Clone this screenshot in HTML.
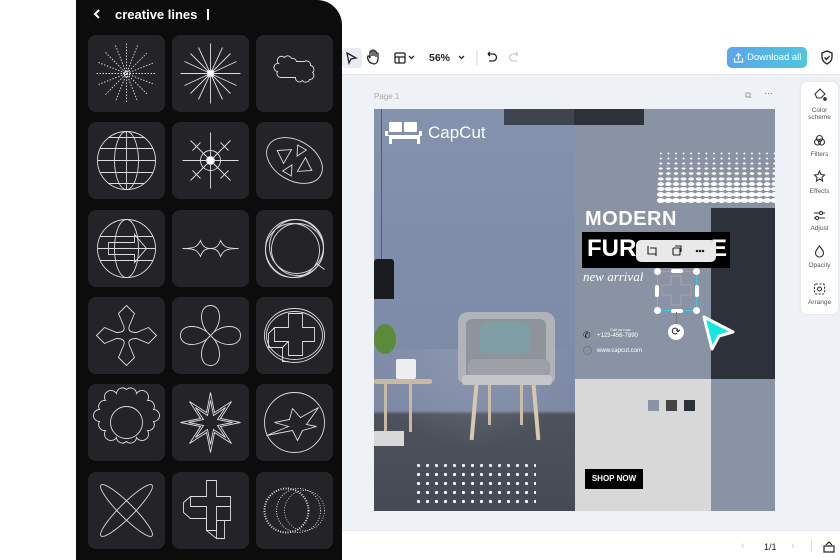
<!DOCTYPE html>
<html><head><meta charset="utf-8"><style>
*{margin:0;padding:0;box-sizing:border-box}
body{width:840px;height:560px;overflow:hidden;background:#fff;position:relative;font-family:"Liberation Sans",sans-serif}
.a{position:absolute}
.tb{color:#222;font-size:11px}
.side div{text-align:center;font-size:6.5px;color:#555;line-height:7px}
.ht{position:absolute;left:0;width:120px}
</style></head><body>
<div class="a" style="left:340px;top:42px;width:500px;height:518px;background:#eef1f5"></div>
<div class="a" style="left:340px;top:42px;width:500px;height:33px;background:#fff;border-bottom:1px solid #e6e8ec"></div>
<div class="a" style="left:340px;top:530px;width:500px;height:30px;background:#fff;border-top:1px solid #e6e8ec"></div>
<div class="a" style="left:342px;top:48px;width:20px;height:20px;background:#e9ecf1;border-radius:4px"></div>
<svg class="a" style="left:340px;top:42px" width="500" height="33" fill="none" stroke="#222" stroke-width="1.3">
<path d="M7 11 L16 16 L11 17 L9 21 Z"/>
<path d="M31 21 c-3-2 -4-5 -3-7 l1 0 l1 2 v-6 a1 1 0 0 1 2 0 v4 v-5 a1 1 0 0 1 2 0 v5 v-4 a1 1 0 0 1 2 0 v5 v-3 a1 1 0 0 1 2 0 v5 c0 3-2 5-4 5z"/>
<rect x="55" y="11" width="10" height="10" rx="1"/><path d="M55 15h10M59 15v6"/>
<path d="M69 14l2.5 2.5 2.5-2.5"/>
<path d="M119 14l2.5 2.5 2.5-2.5"/>
<path d="M137 9v14" stroke="#ddd"/>
<path d="M148 12h5a3.5 3.5 0 0 1 0 7h-4M148 12l2-2M148 12l2 2"/>
<path d="M178 12h-5a3.5 3.5 0 0 0 0 7h4M178 12l-2-2M178 12l-2 2" stroke="#ccc"/>
<path d="M482 11l5-2 5 2v4c0 4-3 6-5 7-2-1-5-3-5-7z"/><path d="M484.5 15.5l2 2 3-3.5"/>
</svg>
<div class="a tb" style="left:429px;top:52px;font-weight:bold;font-size:10.5px">56%</div>
<div class="a" style="left:727px;top:47px;width:80px;height:21px;border-radius:5px;background:linear-gradient(90deg,#5aa6ee,#4fc6dc);color:#fff;font-size:9.5px;line-height:21px;padding-left:20px">Download all</div>
<svg class="a" style="left:733px;top:52px" width="11" height="11" fill="none" stroke="#fff" stroke-width="1.2"><path d="M1.5 6v4h8V6M5.5 8V1.5M3 4l2.5-2.5L8 4"/></svg>
<div class="a" style="left:374px;top:92px;font-size:8px;color:#aaa">Page 1</div>
<div class="a" style="left:745px;top:90px;font-size:9px;color:#999">⧉</div>
<div class="a" style="left:764px;top:88px;font-size:9px;color:#777">···</div>
<div class="a side" style="left:801px;top:82px;width:37px;height:232px;background:#fff;border-radius:6px;box-shadow:0 0 3px rgba(0,0,0,.08)">
<svg class="a" style="left:0;top:0" width="37" height="232" fill="none" stroke="#333" stroke-width="1.1">
<path d="M14 12l5-5 5 5-4 4h-4z"/><circle cx="24" cy="17" r="1.3" fill="#333"/>
<circle cx="16.5" cy="60" r="3"/><circle cx="20.5" cy="60" r="3"/><circle cx="18.5" cy="56.5" r="3"/>
<path d="M18.5 89l1.5 3.5 3.5.5-2.5 2.5.5 3.5-3-2-3 2 .5-3.5-2.5-2.5 3.5-.5z"/>
<path d="M13 131h11M13 136h11"/><circle cx="20" cy="131" r="1.6" fill="#fff"/><circle cx="16" cy="136" r="1.6" fill="#fff"/>
<path d="M18.5 164c-3 4-4 5-4 7a4 4 0 0 0 8 0c0-2-1-3-4-7z"/>
<rect x="13.5" y="202" width="10" height="10" rx="1.5" stroke-dasharray="2 1.5"/><circle cx="18.5" cy="207" r="2"/>
</svg>
<div class="a" style="left:0;top:25px;width:37px">Color<br>scheme</div>
<div class="a" style="left:0;top:69px;width:37px">Filters</div>
<div class="a" style="left:0;top:106px;width:37px">Effects</div>
<div class="a" style="left:0;top:143px;width:37px">Adjust</div>
<div class="a" style="left:0;top:180px;width:37px">Opacity</div>
<div class="a" style="left:0;top:217px;width:37px">Arrange</div>
</div>
<div class="a" style="left:741px;top:540px;font-size:11px;color:#ccc">‹</div>
<div class="a" style="left:764px;top:542px;font-size:9px;color:#222">1/1</div>
<div class="a" style="left:791px;top:540px;font-size:11px;color:#ccc">›</div>
<div class="a" style="left:811px;top:540px;width:1px;height:12px;background:#ddd"></div>
<svg class="a" style="left:822px;top:540px" width="14" height="14" fill="none" stroke="#222" stroke-width="1.2"><rect x="2" y="6" width="10" height="6"/><path d="M4 5l3-3 3 3"/></svg>

<div class="a" style="left:374px;top:109px;width:401px;height:402px;overflow:hidden;background:#8a93a3">
 <div class="a" style="left:0;top:0;width:201px;height:402px;background:linear-gradient(180deg,#8492ad 0%,#7f8dab 40%,#7e8aa5 75%,#4d525c 76%,#454a55 100%)"></div>
 <div class="a" style="left:0;top:240px;width:201px;height:100px;background:radial-gradient(ellipse at 50% 0%,rgba(160,170,190,.4),transparent 70%)"></div>
 <div class="a" style="left:7px;top:0;width:1px;height:150px;background:#a36"></div>
 <div class="a" style="left:0;top:150px;width:20px;height:40px;background:#1b1c1f;border-radius:3px 3px 0 0"></div>
 <div class="a" style="left:0;top:215px;width:22px;height:30px;background:#5a8a3a;border-radius:50%"></div>
 <div class="a" style="left:0;top:270px;width:58px;height:5px;background:#c9b9a0;border-radius:2px"></div>
 <div class="a" style="left:22px;top:250px;width:20px;height:20px;background:#eee;border-radius:2px"></div>
 <div class="a" style="left:10px;top:275px;width:3px;height:50px;background:#c9b9a0"></div>
 <div class="a" style="left:35px;top:275px;width:3px;height:48px;background:#c9b9a0"></div>
 <div class="a" style="left:0;top:322px;width:30px;height:15px;background:#d8d8d8"></div>
 <div class="a" style="left:84px;top:203px;width:97px;height:70px;background:#b0b3b8;border-radius:10px 10px 4px 4px"></div>
 <div class="a" style="left:92px;top:210px;width:80px;height:60px;background:#8f949b;border-radius:6px"></div>
 <div class="a" style="left:106px;top:213px;width:50px;height:32px;background:#7e9fa5;border-radius:8px"></div>
 <div class="a" style="left:94px;top:250px;width:82px;height:20px;background:#9da1a7;border-radius:6px"></div>
 <div class="a" style="left:88px;top:266px;width:90px;height:10px;background:#c4c6c9;border-radius:3px"></div>
 <div class="a" style="left:98px;top:276px;width:4px;height:55px;background:#d7c8b0;transform:rotate(5deg)"></div>
 <div class="a" style="left:160px;top:276px;width:4px;height:55px;background:#d7c8b0;transform:rotate(-5deg)"></div>
 <div class="a" style="left:114px;top:276px;width:3px;height:40px;background:#cbbda6"></div>
 <div class="a" style="left:146px;top:276px;width:3px;height:40px;background:#cbbda6"></div>
 <div class="a" style="left:130px;top:0;width:70px;height:16px;background:#3e4551"></div>
 <div class="a" style="left:200px;top:0;width:70px;height:16px;background:#2c313a"></div>
 <div class="a" style="left:337px;top:99px;width:64px;height:171px;background:#2c313a"></div>
 <div class="a" style="left:201px;top:270px;width:136px;height:132px;background:#d8d8d8"></div>
 <div class="a" style="left:274px;top:291px;width:11px;height:11px;background:#8a93a3"></div>
 <div class="a" style="left:292px;top:291px;width:11px;height:11px;background:#444"></div>
 <div class="a" style="left:310px;top:291px;width:11px;height:11px;background:#2c313a"></div>
 <div class="a" style="left:211px;top:360px;width:58px;height:20px;background:#000;color:#fff;font-size:8px;font-weight:bold;line-height:20px;text-align:center">SHOP NOW</div>
 <svg class="a" style="left:11px;top:12px" width="38" height="26" fill="#fff"><rect x="4" y="1" width="13" height="10" rx="1"/><rect x="19" y="1" width="13" height="10" rx="1"/><path d="M0 10h3v4h31v-4h3v5h-2v8h-3v-5h-25v5h-3v-8h-4z"/></svg>
 <div class="a" style="left:54px;top:14px;color:#fff;font-size:17px">CapCut</div>
 <div class="a" style="left:211px;top:99px;color:#fff;font-size:20px;font-weight:bold;letter-spacing:.5px">MODERN</div>
 <div class="a" style="left:208px;top:123px;width:148px;height:36px;background:#000"></div>
 <div class="a" style="left:213px;top:126px;color:#fff;font-size:24px;font-weight:bold">FUR</div>
 <div class="a" style="left:337px;top:126px;color:#fff;font-size:24px;font-weight:bold">E</div>
 <div class="a" style="left:209px;top:160px;color:#fff;font-size:13px;font-style:italic;font-family:'Liberation Serif',serif">new arrival</div>
 <div class="a" style="left:236px;top:218px;color:#fff;font-size:4px">Call us now</div>
 <div class="a" style="left:223px;top:224px;color:#fff;font-size:6px">+123-456-7890</div>
 <div class="a" style="left:223px;top:239px;color:#fff;font-size:6px">www.capcut.com</div>
 <div class="a" style="left:209px;top:222px;width:9px;height:9px;color:#111;font-size:9px;line-height:9px">✆</div>
 <div class="a" style="left:209px;top:237px;width:9px;height:9px;border:1px solid #777;border-radius:50%"></div>
 <!-- halftone -->
 <div class="a" style="left:283px;top:43px;width:118px;height:52px">
  <div class="ht" style="top:0;height:3px;background:radial-gradient(ellipse 1px 1px,#fff 90%,transparent) 0 0/7.6px 3px"></div>
  <div class="ht" style="top:5px;height:3px;background:radial-gradient(ellipse 1.2px 1px,#fff 90%,transparent) 0 0/7.6px 3px"></div>
  <div class="ht" style="top:10px;height:3px;background:radial-gradient(ellipse 1.6px 1px,#fff 90%,transparent) 0 0/7.6px 3px"></div>
  <div class="ht" style="top:15px;height:3px;background:radial-gradient(ellipse 2px 1.2px,#fff 90%,transparent) 0 0/7.6px 3px"></div>
  <div class="ht" style="top:20px;height:3px;background:radial-gradient(ellipse 2.5px 1.4px,#fff 90%,transparent) 0 0/7.6px 3px"></div>
  <div class="ht" style="top:25px;height:4px;background:radial-gradient(ellipse 3px 1.7px,#fff 90%,transparent) 0 0/7.6px 4px"></div>
  <div class="ht" style="top:30px;height:4px;background:radial-gradient(ellipse 3.4px 2px,#fff 90%,transparent) 0 0/7.6px 4px"></div>
  <div class="ht" style="top:35px;height:4px;background:radial-gradient(ellipse 3.8px 2px,#fff 95%,transparent) 0 0/7.6px 4px"></div>
  <div class="ht" style="top:40px;height:5px;background:radial-gradient(ellipse 4px 2.4px,#fff 95%,transparent) 0 0/7.6px 5px"></div>
  <div class="ht" style="top:46px;height:5px;background:radial-gradient(ellipse 4.2px 2.5px,#fff 95%,transparent) 0 0/7.6px 5px"></div>
 </div>
 <div class="a" style="left:40px;top:352px;width:122px;height:48px;background:radial-gradient(circle,#fff 1.4px,transparent 1.8px) 0 0/9px 9px"></div>
 <div class="a" style="left:262px;top:131px;width:80px;height:22px;background:#e9e9ea;border-radius:5px;box-shadow:0 1px 3px rgba(0,0,0,.2)"></div>
 <svg class="a" style="left:262px;top:131px" width="80" height="22" fill="none" stroke="#222" stroke-width="1.1"><path d="M12 6v8h8M14 8h6v8"/><rect x="37" y="8" width="7" height="7" rx="1"/><path d="M39 6h6v6"/><circle cx="61" cy="11" r=".7" fill="#222"/><circle cx="64" cy="11" r=".7" fill="#222"/><circle cx="67" cy="11" r=".7" fill="#222"/></svg>
 <div class="a" style="left:283px;top:162px;width:40px;height:40px;border:1px solid #3cc8e0"></div>
 <svg class="a" style="left:285px;top:164px" width="36" height="36" fill="none" stroke="#aab" stroke-width=".8"><path d="M12 3h10v9h10v10h-10v10h-10v-10h-9v-10h9z"/></svg>
 <div class="a" style="left:280px;top:159px;width:7px;height:7px;background:#fff;border-radius:50%"></div>
 <div class="a" style="left:319px;top:159px;width:7px;height:7px;background:#fff;border-radius:50%"></div>
 <div class="a" style="left:280px;top:198px;width:7px;height:7px;background:#fff;border-radius:50%"></div>
 <div class="a" style="left:319px;top:198px;width:7px;height:7px;background:#fff;border-radius:50%"></div>
 <div class="a" style="left:297px;top:160px;width:12px;height:4px;background:#fff;border-radius:2px"></div>
 <div class="a" style="left:297px;top:200px;width:12px;height:4px;background:#fff;border-radius:2px"></div>
 <div class="a" style="left:281px;top:176px;width:4px;height:12px;background:#fff;border-radius:2px"></div>
 <div class="a" style="left:321px;top:176px;width:4px;height:12px;background:#fff;border-radius:2px"></div>
 <div class="a" style="left:302px;top:203px;width:1px;height:12px;background:#777"></div>
 <div class="a" style="left:294px;top:215px;width:16px;height:16px;background:#fff;border-radius:50%;font-size:11px;line-height:16px;text-align:center;color:#222">⟳</div>
 <svg class="a" style="left:325px;top:205px" width="40" height="40"><path d="M5 3L34 18L20 22L13 35Z" fill="#14e6e0" stroke="#fff" stroke-width="3" stroke-linejoin="round"/></svg>
</div>

<svg class="a" style="left:76px;top:0" width="266" height="560">
<path d="M0 0H241a25 25 0 0 1 25 25V560H0Z" fill="#0c0c0d"/>
<path d="M23 10l-4 4 4 4" fill="none" stroke="#fff" stroke-width="2"/>
<text x="39" y="19" fill="#fff" font-family="Liberation Sans" font-weight="bold" font-size="13">creative lines</text>
<rect x="131" y="9" width="2" height="11" fill="#fff"/>
<g fill="#242428">
<rect x="12" y="35" width="77" height="77" rx="8"/><rect x="96" y="35" width="77" height="77" rx="8"/><rect x="180" y="35" width="77" height="77" rx="8"/>
<rect x="12" y="122" width="77" height="77" rx="8"/><rect x="96" y="122" width="77" height="77" rx="8"/><rect x="180" y="122" width="77" height="77" rx="8"/>
<rect x="12" y="210" width="77" height="77" rx="8"/><rect x="96" y="210" width="77" height="77" rx="8"/><rect x="180" y="210" width="77" height="77" rx="8"/>
<rect x="12" y="297" width="77" height="77" rx="8"/><rect x="96" y="297" width="77" height="77" rx="8"/><rect x="180" y="297" width="77" height="77" rx="8"/>
<rect x="12" y="384" width="77" height="77" rx="8"/><rect x="96" y="384" width="77" height="77" rx="8"/><rect x="180" y="384" width="77" height="77" rx="8"/>
<rect x="12" y="472" width="77" height="77" rx="8"/><rect x="96" y="472" width="77" height="77" rx="8"/><rect x="180" y="472" width="77" height="77" rx="8"/>
</g>
<g fill="none" stroke="#ddd" stroke-width=".9">
<g transform="translate(50.5,73.5)" stroke-dasharray="1.5 1.5"><path d="M-30 0H30M0-30V30M-21-21L21 21M-21 21L21-21M-28-11L28 11M-28 11L28-11M-11-28L11 28M11-28L-11 28"/><circle r="3"/></g>
<g transform="translate(134.5,73.5)"><path d="M-30 0H30M0-30V30M-20-20L20 20M-20 20L20-20M-26-12L26 12M-26 12L26-12M-12-26L12 26M12-26L-12 26"/><rect x="-3" y="-3" width="6" height="6" fill="#fff"/></g>
<g transform="translate(218.5,73.5)"><path d="M-16-10 a4 4 0 0 1 6-6 a4 4 0 0 1 7 1 a4 4 0 0 1 5 3 H10 a4 4 0 0 1 6 4 a4 4 0 0 1 2 7 a4 4 0 0 1-3 7 a4 4 0 0 1-7 1 a4 4 0 0 1-7-3 H-14 a4 4 0 0 1-3-6 a4 4 0 0 1-3-6 a4 4 0 0 1 4-2z"/></g>
<g transform="translate(50.5,160.5)"><circle r="29"/><ellipse rx="12" ry="29"/><path d="M-29 0H29M-26-12H26M-26 12H26M-18-23H18M-18 23H18M0-29V29"/></g>
<g transform="translate(134.5,160.5)"><path d="M-28 0H28M0-28V28M-20-20L20 20M-20 20L20-20"/><circle r="10"/><circle r="4" fill="#fff"/><path d="M-10-18L-18-10M10-18L18-10M-10 18L-18 10M10 18L18 10"/></g>
<g transform="translate(218.5,160.5) rotate(30)"><ellipse rx="30" ry="20"/><path d="M-20 0L-8-8V8ZM20 0L8-8V8ZM-5-15L5-15L0-5ZM-5 15L5 15L0 5Z"/></g>
<g transform="translate(50.5,248.5)"><circle r="29"/><ellipse rx="12" ry="29"/><path d="M-29 0H29M-26-12H26M-26 12H26"/><path d="M-18-6H8V-14L20 0L8 14V6H-18Z"/></g>
<g transform="translate(134.5,248.5)"><path d="M-28 0C-15 0-13-2-10-8C-8-2-5 0 0 0C5 0 8-2 10-8C13-2 15 0 28 0C15 0 13 2 10 8C8 2 5 0 0 0C-5 0-8 2-10 8C-13 2-15 0-28 0Z"/></g>
<g transform="translate(218.5,248.5)"><circle r="29"/><circle cx="2" cy="-2" r="27"/><circle cx="-2" cy="2" r="27"/><circle cx="3" cy="1" r="26"/><path d="M22 15l8 6"/></g>
<g transform="translate(50.5,335.5)"><path d="M0-30L8-22L3-10Q0-3 10-3L22-8L30 0L22 8L10 3Q0 3 3 10L8 22L0 30L-8 22L-3 10Q0 3-10 3L-22 8L-30 0L-22-8L-10-3Q0-3-3-10L-8-22Z"/></g>
<g transform="translate(134.5,335.5)"><path d="M0 0C-12-10-12-30 0-30C12-30 12-10 0 0C10-12 30-12 30 0C30 12 10 12 0 0C12 10 12 30 0 30C-12 30-12 10 0 0C-10 12-30 12-30 0C-30-12-10-12 0 0Z"/></g>
<g transform="translate(218.5,335.5)"><ellipse rx="30" ry="27"/><ellipse rx="28" ry="24"/><path d="M-6-22H8V-8H20V6H8V20H-6V6H-20V-8H-6Z"/><path d="M-20-8L-26-2V12H-12V26H-6M-12 12L-6 6"/></g>
<g transform="translate(50.5,422.5)"><path d="M0-29a6 6 0 0 1 10 4a6 6 0 0 1 11 7a6 6 0 0 1 6 9a6 6 0 0 1 0 12a6 6 0 0 1-6 9a6 6 0 0 1-11 7a6 6 0 0 1-10 4a6 6 0 0 1-10-4a6 6 0 0 1-11-7a6 6 0 0 1-6-9a6 6 0 0 1 0-12a6 6 0 0 1 6-9a6 6 0 0 1 11-7a6 6 0 0 1 10-4z" transform="translate(0,-4)"/><circle r="16"/></g>
<g transform="translate(134.5,422.5)"><path d="M0-30L4-10L21-21L10-4L30 0L10 4L21 21L4 10L0 30L-4 10L-21 21L-10 4L-30 0L-10-4L-21-21L-4-10Z"/><path d="M0-22L3-7L15-15L7-3L22 0L7 3L15 15L3 7L0 22L-3 7L-15 15L-7 3L-22 0L-7-3L-15-15L-3-7Z"/></g>
<g transform="translate(218.5,422.5)"><circle r="30"/><path d="M-28 13L-6 4L-20 0L-5-3L-2-14L6-5L24-15L12 2L22 4L8 8L3 18L-2 8Z"/></g>
<g transform="translate(50.5,510.5)"><ellipse rx="36" ry="7" transform="rotate(45)"/><ellipse rx="36" ry="7" transform="rotate(-45)"/></g>
<g transform="translate(134.5,510.5)"><path d="M-4-30H6V-14H20V-4H6V20H-4V-4H-20V-14H-4Z"/><path d="M-20-14L-27-8V2L-20 8H-4V20L6 28V10L20 10V-4M6 28H14V10M-27 2L-20 8"/></g>
<g transform="translate(218.5,510.5)" stroke-dasharray="1 1.5" stroke-width="2"><circle cx="-8" r="22"/><circle cx="4" r="22" stroke-width="1"/><circle cx="10" r="20" stroke-width=".8"/></g>
</g>
</svg>
</body></html>
